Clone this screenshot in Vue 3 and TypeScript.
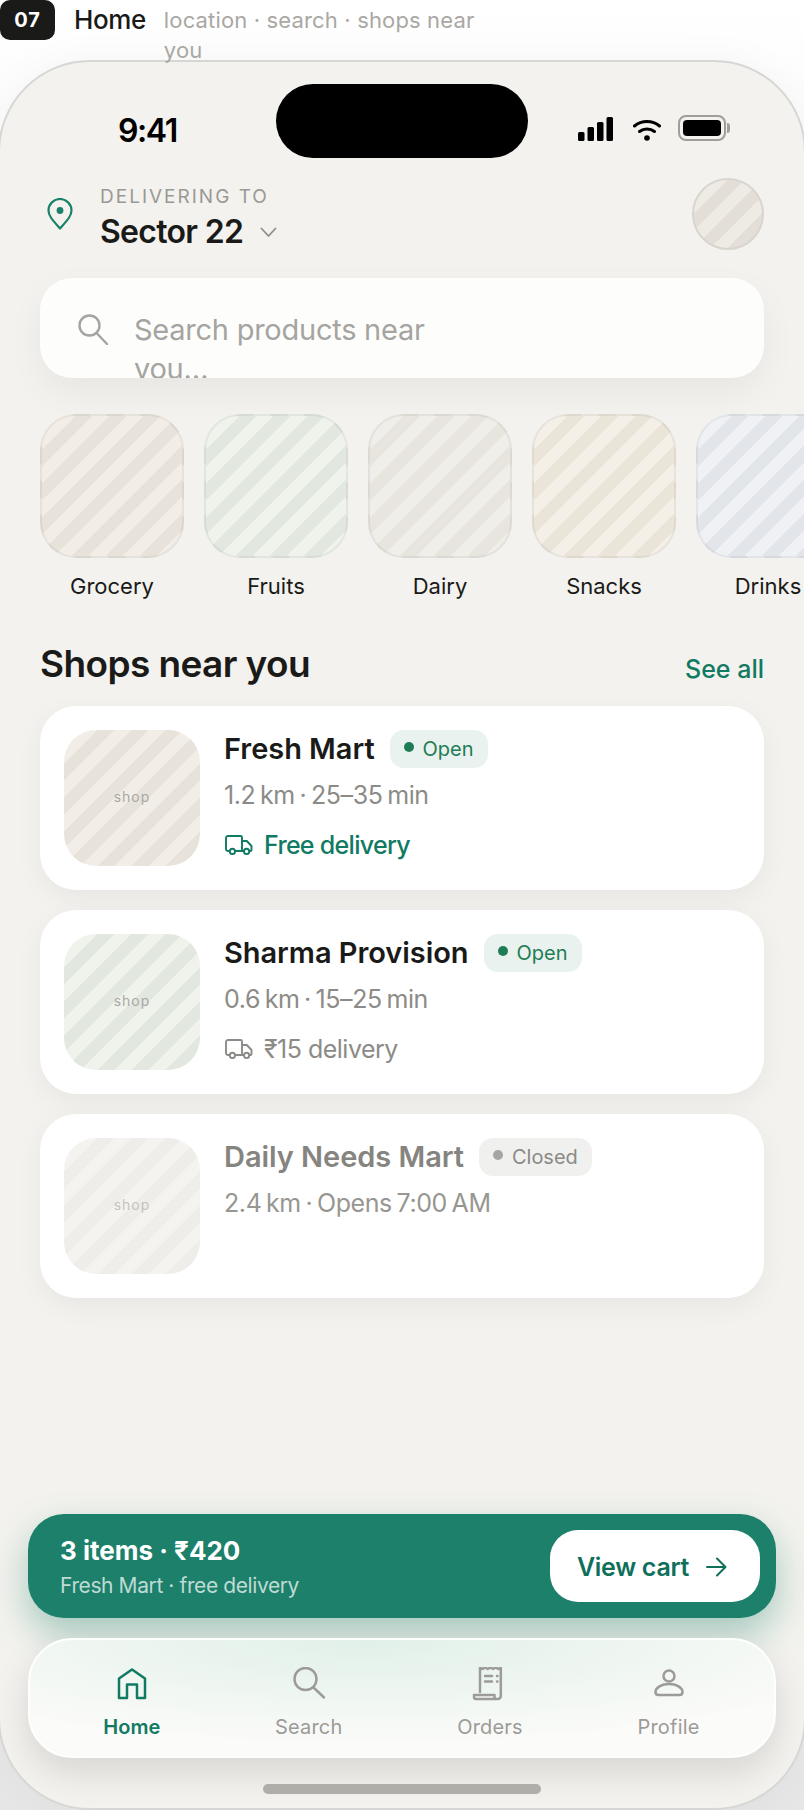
<template>
  <div class="page">
    <header class="caption">
      <span class="step">07</span>
      <span class="caption-title">Home</span>
      <span class="caption-sub">location · search · shops near you</span>
    </header>

    <div class="phone">
      <div class="island"></div>

      <div class="status">
        <span class="time">9:41</span>
        <div class="status-icons">
          <svg class="signal" width="36" height="24" viewBox="0 0 36 24" fill="#000">
            <rect x="0" y="15" width="6.5" height="9" rx="1.5" />
            <rect x="9.5" y="10" width="6.5" height="14" rx="1.5" />
            <rect x="19" y="5" width="6.5" height="19" rx="1.5" />
            <rect x="28.5" y="0" width="6.5" height="24" rx="1.5" />
          </svg>
          <svg class="wifi" width="28" height="22" viewBox="0 0 28 22" fill="none" stroke="#000" stroke-width="3" stroke-linecap="round">
            <path d="M1.5 7C8.5 1 19.5 1 26.5 7" />
            <path d="M6.5 12.5C10.8 9 17.2 9 21.5 12.5" />
            <circle cx="14" cy="19" r="2.8" fill="#000" stroke="none" />
          </svg>
          <div class="battery"><span></span></div>
        </div>
      </div>

      <div class="location">
        <svg class="pin" width="26" height="32" viewBox="0 0 26 32" fill="none" stroke="#1a8268" stroke-width="2.2" stroke-linejoin="round">
          <path d="M13 30.5C6 22.5 1.5 18 1.5 12.5a11.5 11.5 0 0 1 23 0C24.5 18 20 22.5 13 30.5Z" />
          <circle cx="13" cy="12.5" r="3.4" fill="#1a8268" stroke="none" />
        </svg>
        <div class="location-text">
          <div class="location-label">DELIVERING TO</div>
          <div class="location-name">
            Sector 22
            <svg width="17" height="11" viewBox="0 0 17 11" fill="none" stroke="#8f8e8a" stroke-width="1.8" stroke-linecap="round" stroke-linejoin="round">
              <path d="M1.5 1.5 8.5 9l7-7.5" />
            </svg>
          </div>
        </div>
        <div class="avatar"></div>
      </div>

      <div class="search">
        <svg class="search-icon" width="32" height="32" viewBox="0 0 32 32" fill="none" stroke="#a5a4a0" stroke-width="2.4" stroke-linecap="round">
          <circle cx="12.5" cy="12.5" r="10" />
          <path d="M20 20.5 30 31" />
        </svg>
        <div class="search-text">Search products near you…</div>
      </div>

      <div class="cats">
        <div v-for="cat in categories" :key="cat.name" class="cat">
          <div class="tile" :class="cat.tone"></div>
          <div class="cat-name">{{ cat.name }}</div>
        </div>
      </div>

      <div class="section-head">
        <h2>Shops near you</h2>
        <span class="see-all">See all</span>
      </div>

      <div class="shops">
        <div v-for="shop in shops" :key="shop.name" class="card">
          <div class="thumb" :class="shop.tone">shop</div>
          <div class="info">
            <div class="name-row">
              <span class="shop-name" :class="{ dim: !shop.open }">{{ shop.name }}</span>
              <span class="badge" :class="{ closed: !shop.open }"><i></i>{{ shop.open ? 'Open' : 'Closed' }}</span>
            </div>
            <div class="meta" :class="{ dim: !shop.open }">{{ shop.meta }}</div>
            <div v-if="shop.delivery" class="delivery" :class="{ free: shop.free }">
              <svg width="28" height="20" viewBox="0 0 28 20" fill="none" stroke="currentColor" stroke-width="1.9" stroke-linecap="round" stroke-linejoin="round">
                <path d="M4.6 16H3a2 2 0 0 1-2-2V3a2 2 0 0 1 2-2h12.5a1.5 1.5 0 0 1 1.5 1.5V16H10" />
                <path d="M17 6h4.8l4.7 5v4a1 1 0 0 1-1 1h-.9M17 16h1.8" />
                <circle cx="7.4" cy="16.4" r="2.6" />
                <circle cx="21.6" cy="16.4" r="2.6" />
              </svg>
              {{ shop.delivery }}
            </div>
          </div>
        </div>
      </div>

      <div class="dock">
        <div class="cart">
          <div class="cart-text">
            <div class="cart-total">3 items · ₹420</div>
            <div class="cart-sub">Fresh Mart · free delivery</div>
          </div>
          <button class="cart-btn">
            View cart
            <svg width="22" height="22" viewBox="0 0 22 22" fill="none" stroke="#0f6f5b" stroke-width="2" stroke-linecap="round" stroke-linejoin="round">
              <path d="M2 11h18M12 2.500l8.500 8.500-8.500 8.500" />
            </svg>
          </button>
        </div>

        <nav class="tabs">
          <div class="tab active">
            <svg width="36" height="36" viewBox="0 0 36 36" fill="none" stroke="currentColor" stroke-width="2.500" stroke-linecap="round" stroke-linejoin="round">
              <path d="M18 2.500 31 11.500V31H23V17.500H13V31H5V11.500Z" />
            </svg>
            Home
          </div>
          <div class="tab">
            <svg width="36" height="36" viewBox="0 0 36 36" fill="none" stroke="currentColor" stroke-width="2.500" stroke-linecap="round">
              <circle cx="14.500" cy="12" r="11" />
              <path d="M22.500 20.500 33 30.500" />
            </svg>
            Search
          </div>
          <div class="tab">
            <svg width="36" height="36" viewBox="0 0 36 36" fill="none" stroke="currentColor" stroke-width="2.500" stroke-linecap="round" stroke-linejoin="round">
              <g transform="translate(0 -2)">
                <path d="M8 27V2.500l2.600 1.500 2.600-1.500 2.600 1.500 2.600-1.500 2.600 1.500 2.600-1.500 2.600 1.500 2.600-1.500V31a3 3 0 0 1-3 3" />
                <path d="M2 30h20.500v2a2 2 0 0 0 2 2H4a2 2 0 0 1-2-2Z" />
                <path d="M13 11h7M13 16.500h7" />
                <path d="M25 11h.5M25 16.500h.5" />
              </g>
            </svg>
            Orders
          </div>
          <div class="tab">
            <svg width="36" height="36" viewBox="0 0 36 36" fill="none" stroke="currentColor" stroke-width="2.500" stroke-linecap="round" stroke-linejoin="round">
              <circle cx="18" cy="9" r="5.500" />
              <path d="M4.500 25c0-4.500 6-8 13.500-8s13.500 3.500 13.500 8c0 1.700-1 3-3 3H7.500c-2 0-3-1.300-3-3Z" />
            </svg>
            Profile
          </div>
        </nav>

        <div class="home-bar"></div>
      </div>
    </div>
  </div>
</template>

<script setup lang="ts">
interface Category {
  name: string
  tone: string
}

interface Shop {
  name: string
  meta: string
  tone: string
  open: boolean
  delivery?: string
  free?: boolean
}

const categories: Category[] = [
  { name: 'Grocery', tone: 'sand' },
  { name: 'Fruits', tone: 'sage' },
  { name: 'Dairy', tone: 'stone' },
  { name: 'Snacks', tone: 'wheat' },
  { name: 'Drinks', tone: 'mist' }
]

const shops: Shop[] = [
  { name: 'Fresh Mart', meta: '1.2 km · 25–35 min', tone: 'sand', open: true, delivery: 'Free delivery', free: true },
  { name: 'Sharma Provision', meta: '0.6 km · 15–25 min', tone: 'sage', open: true, delivery: '₹15 delivery' },
  { name: 'Daily Needs Mart', meta: '2.4 km · Opens 7:00 AM', tone: 'faded', open: false }
]
</script>

<style>
html,
body {
  margin: 0;
  background: #fff;
}
</style>

<style scoped>
.page {
  width: 804px;
  height: 1810px;
  overflow: hidden;
  font-family: Inter, "Liberation Sans", sans-serif;
  background: linear-gradient(180deg, #fff 0, #f9f9f9 12%, #f1f1f1 70%, #e6e6e7 100%);
  color: #1a1a18;
}

.caption {
  display: flex;
  align-items: flex-start;
  height: 60px;
  position: relative;
  z-index: 2;
}

.step {
  width: 55px;
  height: 40px;
  border-radius: 10px;
  background: #1a1a18;
  color: #fff;
  font-size: 20px;
  font-weight: 700;
  letter-spacing: 1px;
  line-height: 40px;
  text-align: center;
}

.caption-title {
  margin-left: 19px;
  font-size: 26px;
  font-weight: 500;
  line-height: 40px;
  letter-spacing: -0.4px;
}

.caption-sub {
  margin-left: 18px;
  margin-top: 5px;
  width: 330px;
  color: #a9a8a4;
  font-size: 22px;
  line-height: 30px;
  letter-spacing: 0.15px;
}

.phone {
  box-sizing: border-box;
  height: 1750px;
  margin: 0 -2px;
  border: 2px solid #d6d6d4;
  border-radius: 92px;
  background: #f3f2ee;
  box-shadow: 0 0 40px rgba(0, 0, 0, 0.04);
  display: flex;
  flex-direction: column;
  position: relative;
  overflow: hidden;
}

.island {
  position: absolute;
  left: 276px;
  top: 22px;
  width: 252px;
  height: 74px;
  border-radius: 37px;
  background: #000;
}

.status {
  display: flex;
  justify-content: space-between;
  align-items: center;
  height: 108px;
  padding: 0 78px 0 118px;
  box-sizing: border-box;
}

.time {
  margin-top: 28px;
  font-size: 32px;
  font-weight: 600;
  letter-spacing: -1.4px;
  color: #000;
}

.status-icons {
  display: flex;
  align-items: flex-end;
  margin-top: 24px;
}

.wifi {
  margin-left: 19px;
}

.battery {
  box-sizing: border-box;
  width: 48px;
  height: 26px;
  margin-left: 17px;
  padding: 3px;
  border: 2px solid #a19e98;
  border-radius: 8px;
  position: relative;
}

.battery span {
  display: block;
  height: 100%;
  border-radius: 4px;
  background: #000;
}

.battery::after {
  content: "";
  position: absolute;
  right: -6px;
  top: 6px;
  width: 3px;
  height: 10px;
  border-radius: 0 3px 3px 0;
  background: #a19e98;
}

.location {
  display: flex;
  align-items: center;
  height: 72px;
  margin: 8px 40px 0;
}

.pin {
  margin-left: 7px;
}

.location-text {
  flex: 1;
  align-self: flex-start;
  margin-left: 27px;
  padding-top: 7px;
}

.location-label {
  color: #9a9995;
  font-size: 19px;
  letter-spacing: 2px;
  line-height: 24px;
}

.location-name {
  display: flex;
  align-items: center;
  gap: 17px;
  margin-top: 2px;
  font-size: 32px;
  font-weight: 600;
  letter-spacing: -0.7px;
  line-height: 42px;
}

.avatar {
  box-sizing: border-box;
  width: 72px;
  height: 72px;
  border: 2px solid #d9d5ce;
  border-radius: 50%;
  background: repeating-linear-gradient(135deg, #e3dfd8 0 12px, #eeebe4 12px 24px);
}

.search {
  box-sizing: border-box;
  display: flex;
  align-items: flex-start;
  gap: 25px;
  height: 100px;
  margin: 28px 40px 0;
  padding: 32px 0 0 37px;
  border-radius: 32px;
  background: #fdfdfb;
  box-shadow: 0 14px 36px rgba(0, 0, 0, 0.05);
  overflow: hidden;
}

.search-icon {
  flex: none;
  margin-top: 3px;
}

.search-text {
  width: 330px;
  color: #a5a4a0;
  font-size: 29px;
  letter-spacing: -0.25px;
  line-height: 39px;
}

.cats {
  display: flex;
  gap: 20px;
  margin: 36px 0 0 40px;
}

.cat {
  flex: none;
  width: 144px;
  text-align: center;
}

.tile {
  box-sizing: border-box;
  height: 144px;
  border: 2px solid rgba(0, 0, 0, 0.05);
  border-radius: 36px;
}

.cat-name {
  margin-top: 14px;
  font-size: 22px;
  line-height: 28px;
}

.sand {
  background: repeating-linear-gradient(135deg, #e7e3db 0 12px, #f2eee7 12px 24px);
}

.sage {
  background: repeating-linear-gradient(135deg, #e2e8e0 0 12px, #eff3ec 12px 24px);
}

.stone {
  background: repeating-linear-gradient(135deg, #e8e5de 0 12px, #f0eee9 12px 24px);
}

.wheat {
  background: repeating-linear-gradient(135deg, #ebe4d9 0 12px, #f4efe7 12px 24px);
}

.mist {
  background: repeating-linear-gradient(135deg, #e2e5e9 0 12px, #f0f1f5 12px 24px);
}

.faded {
  background: repeating-linear-gradient(135deg, #eeede9 0 12px, #f4f3f0 12px 24px);
}

.section-head {
  display: flex;
  justify-content: space-between;
  align-items: center;
  height: 44px;
  margin: 42px 40px 20px;
}

.section-head h2 {
  margin: 0;
  font-size: 37px;
  font-weight: 600;
  letter-spacing: -0.6px;
  line-height: 44px;
}

.see-all {
  margin-top: 10px;
  color: #117a62;
  font-size: 25px;
  font-weight: 500;
}

.shops {
  display: flex;
  flex-direction: column;
  gap: 20px;
  margin: 0 40px;
}

.card {
  display: flex;
  gap: 24px;
  box-sizing: border-box;
  height: 184px;
  padding: 24px;
  border-radius: 36px;
  background: #fff;
  box-shadow: 0 8px 28px rgba(0, 0, 0, 0.05);
}

.thumb {
  box-sizing: border-box;
  flex: none;
  display: flex;
  align-items: center;
  justify-content: center;
  width: 136px;
  height: 136px;
  padding-bottom: 3px;
  border-radius: 32px;
  color: #a9a8a4;
  font-size: 14px;
  letter-spacing: 1px;
}

.thumb.faded {
  color: #c4c3bf;
}

.name-row {
  display: flex;
  align-items: center;
  gap: 15px;
  height: 38px;
}

.shop-name {
  margin-top: -2px;
  font-size: 29px;
  font-weight: 600;
  letter-spacing: -0.05px;
}

.shop-name.dim {
  color: #85847f;
}

.badge {
  display: flex;
  align-items: center;
  gap: 9px;
  height: 38px;
  padding: 0 14px;
  border-radius: 14px;
  background: #e9f2ee;
  color: #1f7d55;
  font-size: 20px;
  line-height: 40px;
}

.badge i {
  width: 10px;
  height: 10px;
  margin-top: -4px;
  border-radius: 50%;
  background: #1f7d55;
}

.badge.closed {
  background: #f0f0ef;
  color: #8a8a86;
}

.badge.closed i {
  background: #a5a5a3;
}

.meta {
  margin-top: 11px;
  color: #8c8b87;
  font-size: 25px;
  letter-spacing: -0.4px;
  word-spacing: -2px;
  line-height: 32px;
}

.meta.dim {
  color: #979691;
}

.delivery {
  display: flex;
  align-items: center;
  gap: 11px;
  margin-top: 18px;
  margin-left: 1px;
  color: #8c8b87;
  font-size: 25px;
  letter-spacing: -0.5px;
  line-height: 32px;
}

.delivery.free {
  color: #117a62;
  font-weight: 500;
  letter-spacing: -0.7px;
}

.dock {
  margin-top: auto;
  padding: 0 28px 14px;
}

.cart {
  display: flex;
  align-items: center;
  justify-content: space-between;
  box-sizing: border-box;
  height: 104px;
  padding: 0 16px 0 32px;
  border-radius: 36px;
  background: #1c806a;
  box-shadow: 0 16px 36px rgba(28, 128, 106, 0.36);
  color: #fff;
}

.cart-total {
  margin-top: 2px;
  font-size: 26px;
  font-weight: 700;
  line-height: 34px;
}

.cart-sub {
  margin-top: 4px;
  color: rgba(255, 255, 255, 0.72);
  font-size: 21px;
  letter-spacing: -0.4px;
  line-height: 28px;
}

.cart-btn {
  box-sizing: border-box;
  display: flex;
  align-items: center;
  justify-content: center;
  gap: 16px;
  width: 210px;
  height: 72px;
  padding: 2px 6px 0 0;
  border: 0;
  border-radius: 28px;
  background: #fff;
  color: #0f6f5b;
  font: 600 25px Inter, "Liberation Sans", sans-serif;
  letter-spacing: -0.3px;
}

.tabs {
  display: flex;
  justify-content: space-around;
  box-sizing: border-box;
  height: 120px;
  margin-top: 20px;
  padding: 27px 17px 0 16px;
  border: 2px solid #fff;
  border-radius: 44px;
  background: radial-gradient(ellipse 70% 90% at 45% 0, #e1f0e9 0, rgba(225, 240, 233, 0) 100%), #fbfbf9;
  box-shadow: 0 14px 36px rgba(0, 0, 0, 0.12);
}

.tab {
  display: flex;
  flex-direction: column;
  align-items: center;
  gap: 10px;
  color: #9c9b97;
  font-size: 20px;
  letter-spacing: 0.2px;
  line-height: 28px;
}

.tab.active {
  color: #117a62;
  font-weight: 600;
  letter-spacing: 0;
}

.home-bar {
  width: 278px;
  height: 10px;
  margin: 26px auto 0;
  border-radius: 5px;
  background: #b0aea9;
}
</style>
